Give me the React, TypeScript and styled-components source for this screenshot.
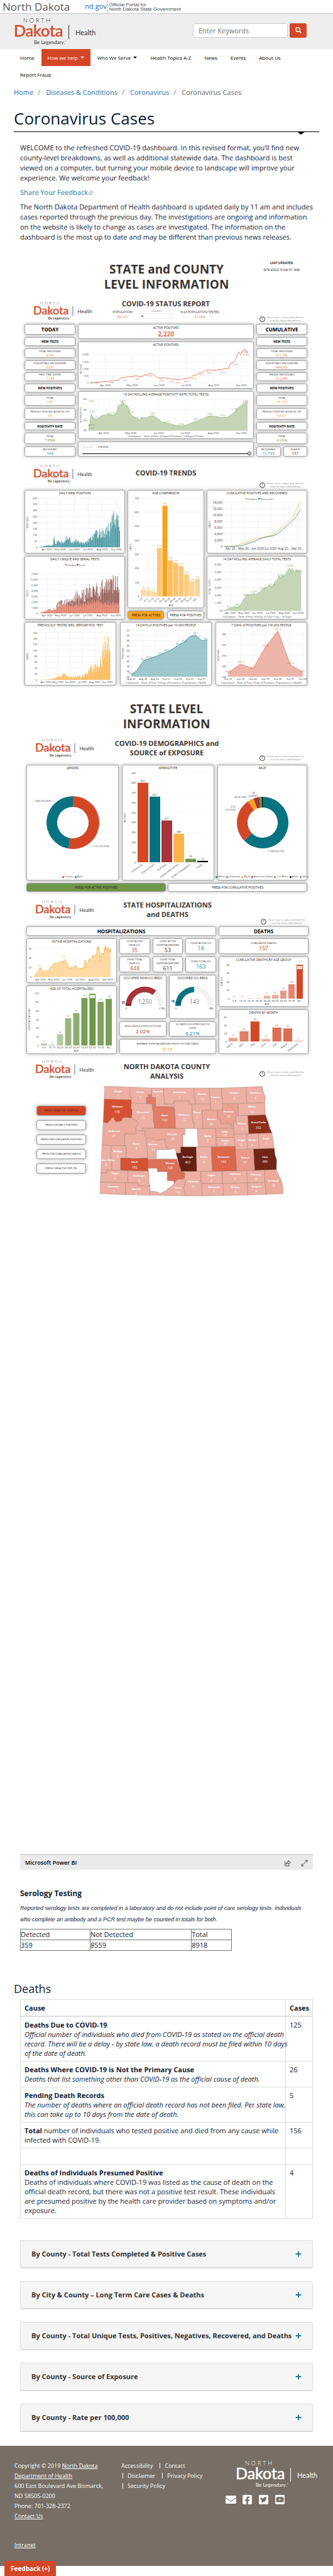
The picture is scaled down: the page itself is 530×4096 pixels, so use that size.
import React from 'react';
import styled, { createGlobalStyle } from 'styled-components';
import { FaEnvelope, FaFacebookSquare, FaTwitterSquare, FaYoutubeSquare, FaSearch, FaPlus } from 'react-icons/fa';

const color = {
  orange: '#d34727',
  teal: '#077380',
  yellow: '#faa21b',
  green: '#6f9649',
  maroon: '#a73439',
  black: '#000000',
  ink: '#111c33',
  title: '#3a3532',
  link: '#1a75ad',
  grid: '#cfcfcf',
};

const Global = createGlobalStyle`
  * { box-sizing: border-box; }
  body { margin: 0; background: #fff; color: ${color.ink}; font-family: "Open Sans", "Noto Sans", sans-serif; font-size: 11px; line-height: 16px; }
  h1, h2, h3, h4, p, ul, ol { margin: 0; padding: 0; }
  ul, ol { list-style: none; }
  button, input, select { font-family: inherit; }
  a { color: ${color.link}; text-decoration: none; }
  svg { display: block; }
`;

/* ---------- site header ---------- */

const Portal = styled.div`
  display: flex; align-items: center; height: 22px; padding: 0 4px; border-bottom: 1px solid #c4c4c4;
`;
const PortalState = styled.span`font-size: 17px; line-height: 20px; color: #5a5a5a; margin-right: 24px;`;
const PortalSite = styled.a`
  font-size: 11px; line-height: 18px; height: 20px; color: #2b62ab; border-right: 1px solid #bbb; padding-right: 1px; margin-right: 2px;
`;
const PortalNote = styled.span`font: 8px/7px "Liberation Sans", Arial, sans-serif; color: #4a4a4a;`;

const Banner = styled.header`
  display: flex; justify-content: space-between; align-items: center; height: 56px; padding: 0 42px 0 22px; background: #eee;
`;
const LogoBox = styled.div<{ $width: number }>`width: ${p => p.$width}px; flex: none; svg { width: 100%; }`;
const Search = styled.form`display: flex; gap: 3px; margin-bottom: 4px;`;
const SearchInput = styled.input`
  width: 151px; height: 23px; padding: 0 8px; border: 1px solid #ccc; border-radius: 3px; background: #fff; font-size: 11px;
  &::placeholder { color: #757575; opacity: 1; }
`;
const SearchButton = styled.button`
  display: flex; align-items: center; justify-content: center; width: 27px; height: 23px; padding: 0; border: 0; border-radius: 3px;
  background: ${color.orange}; color: #fff; font-size: 10px;
`;
const Nav = styled.nav`padding: 0 22px;`;
const NavList = styled.ul`display: flex; flex-wrap: wrap; column-gap: 1px; padding-right: 20px;`;
const NavLink = styled.a<{ $active?: boolean }>`
  display: flex; align-items: center; gap: 4px; height: 27px; padding: 0 10px; font-size: 8px;
  color: ${p => (p.$active ? '#fff' : '#000')}; background: ${p => (p.$active ? color.orange : 'transparent')};
`;
const Caret = styled.span`border: 3px solid transparent; border-top: 3px solid currentColor; border-bottom: 0;`;

const Main = styled.main`padding: 7px 22px 22px;`;
const Crumbs = styled.ol`
  display: flex; color: #666; font-size: 11px; line-height: 16px;
  li + li::before { content: "/"; margin: 0 9px 0 7px; color: #777; }
`;
const PageTitle = styled.h1`
  position: relative; margin-top: 17px; padding-bottom: 5px; border-bottom: 1px solid #000;
  font-size: 26px; line-height: 32px; font-weight: 400; color: ${color.ink};
  &::after { content: ""; position: absolute; right: 22px; top: 37px; border: 7px solid transparent; border-top: 5px solid #000; border-bottom: 0; }
`;
const Body = styled.div`padding: 0 10px;`;
const Intro = styled.div`
  display: flex; flex-direction: column; gap: 7px; margin: 17px -10px 0 0;
  p { white-space: pre-line; }
`;
const ExternalLink = styled.a`display: inline-flex; align-items: center; gap: 1px;`;

/* ---------- report ---------- */

const Report = styled.section`padding-bottom: 1045px; color: #252423;`;
const ReportTop = styled.div<{ $top: number }>`position: relative; padding-top: ${p => p.$top}px;`;
const Updated = styled.div`
  position: absolute; right: 17px; top: 29px; width: 66px; text-align: center; font-size: 6px; line-height: 10px;
  b { display: block; font-size: 5px; line-height: 8px; margin-bottom: 2px; }
`;
const ReportTitle = styled.h2`
  text-align: center; font-size: 19px; line-height: 24px; font-weight: 700; color: ${color.title};
`;
const Board = styled.section<{ $top: number; $left: number; $right: number }>`
  margin: ${p => p.$top}px ${p => p.$right}px 0 ${p => p.$left}px;
`;
const BoardHead = styled.div<{ $height: number }>`
  display: grid; grid-template-columns: 1fr auto 1fr; height: ${p => p.$height}px;
`;
const BoardLogo = styled.div<{ $top: number }>`padding: ${p => p.$top}px 0 0 14px;`;
const BoardMid = styled.div<{ $top: number }>`padding-top: ${p => p.$top}px; text-align: center;`;
const BoardTitle = styled.h3`font-size: 11px; line-height: 15px; font-weight: 700; color: ${color.title};`;
const Help = styled.div<{ $bottom: number }>`
  display: flex; align-self: end; justify-self: end; align-items: center; gap: 3px; padding: 0 5px ${p => p.$bottom}px 0;
  font-size: 4px; line-height: 5px; color: #777; text-align: center;
`;
const HelpButton = styled.button`
  width: 9px; height: 9px; padding: 0; border: 1px solid #333; border-radius: 50%; background: #fff; color: #222; font-size: 6px; line-height: 7px;
`;
const Facts = styled.div`display: flex; justify-content: center; gap: 11px; margin-top: 2px;`;
const Fact = styled.div<{ $small?: boolean }>`
  font-size: ${p => (p.$small ? 4 : 5)}px; line-height: 8px; color: ${p => (p.$small ? '#777' : '#333')};
  b { display: block; font-size: 5px; font-weight: 400; color: #e0705a; }
  label { display: block; line-height: 6px; }
`;
const CountySelect = styled.select`
  display: block; width: 55px; height: 9px; padding: 0 2px; border: 1px solid #eee; background: #fff; color: #333; font-size: 4px; appearance: none;
`;
const SelectBox = styled.span`
  position: relative; display: block;
  svg { position: absolute; right: 2px; top: 3px; width: 4px; }
`;

const Columns = styled.div<{ $cols: string; $gap: number; $top?: number }>`
  display: grid; grid-template-columns: ${p => p.$cols}; gap: 4px ${p => p.$gap}px; margin-top: ${p => p.$top || 0}px;
`;
const Stack = styled.div`display: flex; flex-direction: column; gap: 4px; min-width: 0;`;
const Card = styled.div<{ $h: number }>`
  display: flex; flex-direction: column; min-width: 0; min-height: ${p => p.$h}px; background: #fff; border: 1px solid #a5a5a5; border-radius: 3px;
  box-shadow: 0 0 4px 1px rgba(0, 0, 0, 0.22);
  svg { width: 100%; }
`;
const Center = styled(Card)`justify-content: center; align-items: center; text-align: center;`;
const CardTitle = styled.h4`
  font-size: 5px; line-height: 9px; font-weight: 400; text-align: center; color: #252423; white-space: nowrap;
`;
const Heading = styled.h4<{ $size: number }>`font-size: ${p => p.$size}px; line-height: 10px; font-weight: 700; color: #000;`;
const Label = styled.div<{ $tight?: boolean }>`font-size: ${p => (p.$tight ? 3 : 4)}px; line-height: 6px; color: #252423; white-space: pre;`;
const Value = styled.div<{ $size: number; $tint: string; $bold?: boolean }>`
  font-size: ${p => p.$size}px; line-height: ${p => p.$size + 1}px; color: ${p => p.$tint}; font-weight: ${p => (p.$bold ? 700 : 400)};
`;
const Press = styled.button<{ $h: number; $fill?: string; $small?: boolean }>`
  min-width: 0; height: ${p => p.$h}px; padding: 0; border: 1px solid #9a9a9a; border-radius: 4px; background: ${p => p.$fill || '#fff'};
  box-shadow: 0 0 4px 1px rgba(0, 0, 0, 0.22); color: #111; font-size: ${p => (p.$small ? 4 : 5)}px; line-height: 8px; white-space: nowrap;
`;
const Legend = styled.ul`
  display: flex; justify-content: center; gap: 2px; margin-top: auto; padding-bottom: 2px; font-size: 4px; line-height: 6px; color: #333;
  li { display: flex; align-items: center; gap: 1px; white-space: nowrap; }
`;
const Dot = styled.i<{ $tint: string }>`width: 3px; height: 3px; border-radius: 50%; background: ${p => p.$tint};`;
const Dates = styled.div`display: flex; gap: 2px; padding: 3px 3px 0;`;
const DateInput = styled.input`
  width: 23px; height: 9px; padding: 0 2px; border: 1px solid #eee; font-size: 4px; color: #222;
  &:disabled { background: #fff; color: #bbb; }
`;
const Range = styled.input`
  appearance: none; display: block; width: auto; height: 8px; margin: 2px 3px 0 6px; background: linear-gradient(#000, #000) center / 100% 1px no-repeat;
  &::-webkit-slider-thumb { appearance: none; width: 6px; height: 6px; border: 1px solid #222; border-radius: 50%; background: #fff; }
`;
const CountyLayout = styled.div`display: grid; grid-template-columns: 79px 1fr; gap: 22px; padding: 0 38px 0 16px; margin-top: 8px;`;
const CountyButtons = styled.div`display: flex; flex-direction: column; gap: 7px; padding-top: 31px;`;
const MapFigure = styled.div`svg { width: 100%; }`;

/* ---------- drawings ---------- */

function Logo({ light }: { light?: boolean }) {
  const dark = light ? '#fff' : '#333';
  return (
    <svg viewBox="0 0 132 45" fontFamily="Lato, sans-serif" role="img" aria-label="North Dakota Health, Be Legendary">
      <text x="15" y="8" fontSize="9" fontWeight="300" letterSpacing="3" fill={dark}>NORTH</text>
      <text x="0" y="30" fontSize="25" fontWeight="400" stroke={light ? '#fff' : color.orange} strokeWidth="0.5" fill={light ? '#fff' : color.orange}>Dakota</text>
      <path d="M87.500 12V34" stroke={dark} strokeWidth="1" />
      <text x="98" y="28" fontSize="11" fill={dark}>Health</text>
      <text x="32" y="42" fontSize="8" fill={dark}>Be Legendary.<tspan fontSize="3" dy="-3">™</tspan></text>
    </svg>
  );
}

const MONTHS: [string, number][] = [['Apr', 17], ['May', 47], ['Jun', 78], ['Jul', 108], ['Aug', 139], ['Sep', 170]];
type Pt = [number, number];
type Tag = [number, number, string];
interface Plot {
  w: number; h: number; l: number; r: number; t: number; b: number; // drawing size and plot edges
  lo: number; hi: number; // values at the bottom and top edges
}
const yOf = (p: Plot, v: number) => p.b - ((v - p.lo) / (p.hi - p.lo)) * (p.b - p.t);
const dayX = (p: Plot, d: number) => p.l + (d / 177) * (p.r - p.l);

function Axis({ p, ticks, fmt, name, size = 4, faint }: { p: Plot; ticks: number[]; fmt?: (v: number) => string; name?: string; size?: number; faint?: boolean }) {
  return (
    <g fontSize={size} fill="#333">
      {ticks.map(v => (
        <g key={v}>
          <path d={`M${p.l - 2} ${yOf(p, v)}H${p.r + 2}`} stroke={faint ? '#eee' : color.grid} strokeWidth="0.6" strokeDasharray="0.7 1" />
          <text x={p.l - 3} y={yOf(p, v) + 1.5} textAnchor="end">{fmt ? fmt(v) : v.toLocaleString('en-US')}</text>
        </g>
      ))}
      {name && <text transform={`translate(5 ${(p.t + p.b) / 2}) rotate(-90)`} fontSize="4" textAnchor="middle">{name}</text>}
    </g>
  );
}

function MonthAxis({ p, short, plain, size = 4 }: { p: Plot; short?: boolean; plain?: boolean; size?: number }) {
  return (
    <g fontSize={size} fill="#333">
      {MONTHS.map(([m, d]) => (
        <g key={m}>
          {!plain && <path d={`M${dayX(p, d)} ${p.t}V${p.b}`} stroke={color.grid} strokeWidth="0.6" strokeDasharray="0.7 1" />}
          <text x={dayX(p, d)} y={p.b + 5} textAnchor="middle">{m} {short && !m.startsWith('Ju') ? '20...' : '2020'}</text>
        </g>
      ))}
    </g>
  );
}

function DateAxis({ p, labels, x }: { p: Plot; labels: string[]; x: (i: number) => number }) {
  return (
    <g fontSize="4" fill="#333" textAnchor="middle">
      {labels.map((s, i) => (
        <g key={s}>
          <path d={`M${x(i)} ${p.t}V${p.b}`} stroke={color.grid} strokeWidth="0.6" strokeDasharray="0.7 1" />
          <text x={x(i)} y={p.b + 5}>{s}</text>
        </g>
      ))}
    </g>
  );
}

function Tags({ p, tags, fill, at }: { p: Plot; tags: Tag[]; fill: string; at?: (d: number) => number }) {
  return (
    <g fontSize="4" fill={fill} textAnchor="middle">
      {tags.map(([d, v, s]) => <text key={s + d} x={at ? at(d) : dayX(p, d)} y={yOf(p, v) + 1.5}>{s}</text>)}
    </g>
  );
}

function Line({ p, data, stroke, fill, at }: { p: Plot; data: Pt[]; stroke: string; fill?: string; at?: (d: number) => number }) {
  const x = at || ((d: number) => dayX(p, d));
  const path = 'M' + data.map(([d, v]) => `${x(d).toFixed(1)} ${yOf(p, v).toFixed(1)}`).join('L');
  return (
    <>
      {fill && <path d={`${path}V${p.b}H${x(data[0][0])}Z`} fill={fill} fillOpacity="0.4" />}
      <path d={path} fill="none" stroke={stroke} strokeWidth="0.7" />
    </>
  );
}

const Caption = ({ p, y, children }: { p: Plot; y: number; children: string }) => (
  <text x={p.w / 2} y={y} fontSize="4" fill="#333" textAnchor="middle">{children}</text>
);

/* value of a piecewise linear curve at one day, with a repeatable day to day variation */
function daily(env: Pt[], swing: number, seed: number) {
  const out: number[] = [];
  for (let d = 0; d <= 177; d++) {
    let i = 0;
    while (i < env.length - 2 && env[i + 1][0] < d) i++;
    const [a, va] = env[i];
    const [b, vb] = env[i + 1];
    const v = va + ((vb - va) * (d - a)) / (b - a);
    const n = Math.abs(Math.sin(d * 12.9898 + seed) * 43758.5453) % 1;
    out.push(v * (1 - swing * n));
  }
  return out;
}

function DayBars({ p, values, fill, base }: { p: Plot; values: number[]; fill: string; base?: number[] }) {
  return (
    <g fill={fill}>
      {values.map((v, d) => {
        const from = base ? Math.min(base[d], v) : 0;
        return <rect key={d} x={dayX(p, d) - 0.35} y={yOf(p, v)} width="0.7" height={Math.max(0, yOf(p, from) - yOf(p, v))} opacity={d % 4 < 2 ? 1 : 0.72} />;
      })}
    </g>
  );
}

interface Bar { name: string; v: number; tint?: string; alpha?: number; boxed?: boolean }
function Bars({ p, bars, step, width, fill, tilt, tag }: { p: Plot; bars: Bar[]; step: number; width: number; fill?: string; tilt?: boolean; tag?: string }) {
  return (
    <g fontSize="4" textAnchor="middle">
      {bars.map((b, i) => {
        const x = p.l + i * step;
        const mid = x + width / 2;
        const y = yOf(p, Math.min(b.v, p.hi));
        return (
          <g key={b.name}>
            <rect x={x} y={y} width={width} height={p.b - y} fill={b.tint || fill} opacity={b.alpha || 1} />
            {b.boxed && <rect x={mid - 4} y={y + 2} width="8" height="5" fill="#fff" />}
            <text x={mid} y={b.boxed ? y + 6 : y - 2} fill={tag || fill}>{b.v}</text>
            {tilt
              ? <text transform={`translate(${mid} ${p.b + 4}) rotate(-36)`} textAnchor="end" fill="#333">{b.name}</text>
              : <text x={mid} y={p.b + 5} fill="#333">{b.name}</text>}
          </g>
        );
      })}
    </g>
  );
}

function Donut({ cx, cy, r, inner, parts }: { cx: number; cy: number; r: number; inner: number; parts: [number, string][] }) {
  const total = parts.reduce((s, [v]) => s + v, 0);
  let from = 0;
  return (
    <>
      {parts.map(([v, tint]) => {
        const a = (from / total) * 2 * Math.PI;
        from += v;
        const b = (from / total) * 2 * Math.PI;
        const pt = (rad: number, t: number) => `${(cx + rad * Math.sin(t)).toFixed(2)} ${(cy - rad * Math.cos(t)).toFixed(2)}`;
        const big = b - a > Math.PI ? 1 : 0;
        return <path key={tint} fill={tint} d={`M${pt(r, a)}A${r} ${r} 0 ${big} 1 ${pt(r, b)}L${pt(inner, b)}A${inner} ${inner} 0 ${big} 0 ${pt(inner, a)}Z`} />;
      })}
    </>
  );
}

function Gauge({ value, max, mark, share, tint }: { value: string; max: string; mark: string; share: number; tint: string }) {
  const cx = 40, cy = 40, r = 31, inner = 22;
  const pt = (rad: number, s: number) => `${(cx - rad * Math.cos(s * Math.PI)).toFixed(2)} ${(cy - rad * Math.sin(s * Math.PI)).toFixed(2)}`;
  const arc = (a: number, b: number) => `M${pt(r, a)}A${r} ${r} 0 0 1 ${pt(r, b)}L${pt(inner, b)}A${inner} ${inner} 0 0 0 ${pt(inner, a)}Z`;
  const m = mark === '18' ? 0.062 : 0.02;
  return (
    <svg viewBox="0 0 74 59">
      <path d={arc(0, 1)} fill="#f3f2f1" />
      <path d={arc(0, share)} fill={tint} />
      <path d={`M${pt(r, m)}L${pt(inner, m)}`} stroke="#000" strokeWidth="0.7" />
      <text x="8" y={mark === '18' ? 34 : 37} fontSize="5" fontWeight="600" textAnchor="end">{mark}</text>
      <text x={cx} y="37" fontSize="9" fontWeight="300" textAnchor="middle" fill="#222">{value}</text>
      <text x="10" y="46" fontSize="4" textAnchor="middle">0</text>
      <text x="67" y="46" fontSize="4" textAnchor="middle">{max}</text>
    </svg>
  );
}

/* ---------- data ---------- */

const ACTIVE: Pt[] = [[0, 5], [11, 60], [17, 100], [25, 135], [30, 170], [32, 220], [34, 360], [39, 370], [41, 435], [46, 440], [49, 490], [53, 490], [56, 430], [59, 480], [61, 560], [64, 560], [66, 680], [69, 650], [72, 550], [74, 420], [77, 350], [80, 325], [83, 370], [85, 330], [89, 310], [92, 265], [97, 245], [99, 225], [103, 260], [107, 290], [110, 350], [113, 350], [115, 490], [118, 560], [121, 610], [123, 720], [127, 750], [129, 870], [133, 920], [134, 890], [136, 930], [139, 885], [142, 900], [145, 965], [148, 915], [150, 1015], [153, 1025], [155, 975], [157, 1280], [159, 1430], [161, 1430], [163, 1600], [165, 1930], [167, 2190], [169, 2010], [171, 2250], [174, 2390], [175, 2280], [177, 2110]];
const ACTIVE_TAGS: Tag[] = [[1, 20, '6'], [8, 20, '60'], [24, 30, '132'], [39, 190, '376'], [53, 300, '491'], [67, 485, '672'], [80, 150, '323'], [91, 100, '275'], [99, 30, '213'], [108, 120, '303'], [117, 330, '523'], [126, 605, '771'], [134, 745, '922'], [149, 715, '912'], [162, 1310, '1,508'], [174, 2200, '2,394'], [175, 2035, '2,220']];
const RATE: Pt[] = [[0, 1.2], [1, 0.7], [3, 3.2], [5, 2.4], [7, 2.2], [10, 2.2], [11, 2.4], [13, 2.7], [16, 3], [20, 3], [22, 3.4], [24, 3.1], [27, 3], [30, 3.2], [32, 3.9], [33, 4.8], [36, 5], [38, 5.6], [40, 5], [43, 4.8], [45, 4.2], [46, 3.4], [49, 2.8], [53, 2.5], [55, 2.3], [57, 2], [58, 2.3], [62, 2.5], [64, 2.4], [67, 2.7], [71, 2.9], [74, 2.7], [77, 2.3], [79, 2.1], [81, 1.7], [84, 1.6], [88, 1.4], [92, 1.3], [97, 1], [104, 0.9], [109, 1.1], [112, 1.3], [117, 1.7], [122, 1.8], [124, 2.2], [126, 2.2], [131, 2.6], [135, 2.8], [142, 2.7], [148, 2.5], [155, 2.6], [158, 3], [162, 3.4], [165, 4.2], [168, 4.6], [170, 4.8], [173, 5.3], [175, 5.5], [177, 5.5]];
const RATE_TAGS: Tag[] = [[3, 5.75, '5.9%'], [4, 3.6, '3.2%'], [8, 2.6, '2.2%'], [3, 1.1, '0.8%'], [3, 0.4, '0.0%'], [27, 3.4, '3.1%'], [38, 5.75, '5.6%'], [47, 3.5, '3.1%'], [57, 2.4, '2.1%'], [71, 3.25, '2.9%'], [87, 1.75, '1.4%'], [103, 1.3, '0.9%'], [119, 2.2, '1.8%'], [135, 3.2, '2.8%'], [149, 2.9, '2.5%'], [163, 4.1, '3.7%'], [175, 5.75, '5.6%']];
const NEW_POSITIVES = daily([[0, 1], [8, 8], [17, 20], [25, 20], [30, 25], [33, 95], [36, 45], [40, 60], [43, 75], [47, 50], [55, 70], [62, 95], [66, 95], [70, 60], [76, 50], [82, 70], [90, 50], [100, 45], [108, 65], [114, 100], [120, 115], [128, 160], [136, 140], [139, 170], [143, 150], [148, 190], [152, 200], [156, 160], [158, 275], [161, 265], [165, 335], [167, 370], [169, 270], [172, 355], [175, 320], [177, 240]], 0.55, 3);
const TESTS_TOTAL = daily([[0, 10], [10, 450], [17, 650], [30, 950], [35, 1100], [40, 2100], [50, 2500], [60, 2700], [70, 2400], [78, 3200], [83, 4000], [88, 3400], [95, 4400], [103, 4400], [112, 5900], [120, 5000], [128, 5600], [135, 5200], [140, 6000], [147, 6000], [152, 7000], [159, 7700], [162, 7000], [168, 7900], [172, 7200], [177, 5000]], 0.55, 8);
const TESTS_UNIQUE = daily([[0, 10], [10, 400], [17, 600], [35, 900], [40, 2000], [50, 2200], [60, 2000], [80, 1900], [100, 2000], [120, 2500], [140, 2200], [177, 2000]], 0.45, 5);
const NEG_BEFORE = daily([[0, 0], [17, 1], [35, 4], [45, 12], [55, 20], [65, 22], [75, 12], [90, 14], [105, 16], [115, 22], [122, 35], [126, 58], [131, 50], [136, 45], [141, 62], [146, 72], [150, 55], [153, 112], [157, 100], [162, 160], [165, 130], [171, 170], [174, 150], [177, 95]], 0.6, 11);
const CUM_POS: Pt[] = [[0, 0], [17, 150], [30, 350], [33, 550], [47, 1150], [52, 1400], [56, 1450], [62, 1900], [68, 2300], [75, 2550], [85, 2850], [95, 3150], [108, 3550], [113, 3850], [120, 4500], [130, 5700], [139, 6600], [148, 7800], [156, 8900], [162, 10100], [166, 11500], [170, 12300], [174, 13600], [177, 14100]];
const CUM_REC: Pt[] = [[0, 0], [30, 150], [40, 300], [47, 650], [55, 950], [62, 1350], [70, 1600], [78, 2250], [88, 2700], [100, 3100], [115, 3500], [122, 4000], [130, 4800], [139, 5800], [148, 7000], [156, 8000], [163, 8900], [168, 9800], [173, 11000], [177, 11800]];
const ROLLING: Pt[] = [[-6, 10], [0, 10], [5, 60], [10, 200], [17, 380], [25, 500], [33, 490], [37, 600], [42, 950], [47, 1500], [50, 1700], [53, 2050], [58, 1950], [62, 2150], [66, 2100], [70, 2250], [74, 2100], [78, 2150], [82, 2400], [84, 2350], [87, 2650], [91, 2700], [95, 3000], [101, 3050], [105, 3350], [107, 3150], [112, 3150], [116, 3500], [120, 3900], [123, 3900], [126, 4500], [130, 4300], [134, 4500], [138, 4450], [141, 4650], [145, 5000], [148, 5300], [151, 5500], [154, 5000], [157, 5400], [160, 5050], [163, 4950], [166, 5300], [170, 5100], [174, 5200], [177, 4900]];
const ROLLING_TAGS: Tag[] = [[-6, 270, '1'], [13, 530, '251'], [32, 750, '495'], [51, 2050, '1,804'], [69, 2480, '2,228'], [89, 2900, '2,692'], [109, 3400, '3,154'], [131, 4550, '4,201'], [152, 5780, '5,507'], [171, 5180, '4,914']];
const HOSP: Pt[] = [[2, 0], [4, 4], [9, 10], [12, 12], [15, 20], [18, 19], [22, 12], [24, 10], [28, 14], [32, 12], [36, 15], [40, 22], [44, 26], [50, 30], [55, 28], [58, 32], [62, 30], [65, 35], [68, 32], [71, 38], [74, 34], [78, 30], [81, 21], [85, 18], [88, 22], [91, 19], [94, 24], [98, 24], [101, 18], [105, 17], [108, 20], [112, 17], [116, 24], [118, 36], [121, 29], [124, 28], [128, 39], [131, 36], [134, 42], [137, 48], [141, 43], [145, 52], [147, 64], [149, 66], [151, 58], [153, 40], [155, 46], [158, 52], [161, 48], [163, 60], [165, 67], [167, 61], [169, 63], [172, 62], [174, 54], [176, 60], [177, 53]];
const AGES: Bar[] = ([['0-5', 48, 0.4], ['6-11', 48, 0.4], ['12-14', 35, 0.4], ['15-19', 345, 0.6], ['20-29', 646, 1], ['30-39', 256, 0.7], ['40-49', 238, 0.65], ['50-59', 216, 0.6], ['60-69', 158, 0.55], ['70-79', 106, 0.45], ['80+', 124, 0.45]] as [string, number, number][]).map(([name, v, alpha]) => ({ name, v, alpha }));
const SPREAD: Bar[] = [
  { name: 'Community', v: 801, tint: color.orange }, { name: 'Close Contact', v: 661, tint: color.teal }, { name: 'Unknown', v: 421, tint: color.maroon },
  { name: 'Household Contact', v: 288, tint: '#fdb549' }, { name: 'Under Investigation', v: 35, tint: color.green }, { name: 'Travel', v: 14, tint: '#000' },
];
const DECADES = ['0-9', '10-19', '20-29', '30-39', '40-49', '50-59', '60-69', '70-79', '80+'];
const HOSP_AGES: Bar[] = [5, 2, 26, 63, 75, 110, 121, 101, 108].map((v, i) => ({ name: DECADES[i], v, alpha: [0.45, 0.45, 0.5, 0.7, 0.78, 0.93, 1, 0.88, 0.92][i], boxed: v === 121 }));
const DEATH_AGES: Bar[] = [0, 0, 1, 1, 7, 9, 19, 34, 86].map((v, i) => ({ name: DECADES[i], v, alpha: [0.4, 0.4, 0.4, 0.4, 0.42, 0.45, 0.55, 0.65, 1][i], boxed: v === 86 }));
const DEATH_MONTHS: Bar[] = ([['March', 9, 0.5], ['April', 25, 0.7], ['May', 49, 1], ['June', 6, 0.45], ['July', 34, 0.8], ['August', 32, 0.8], ['September', 2, 0.4]] as [string, number, number][]).map(([name, v, alpha]) => ({ name, v, alpha }));

/* name, active cases, label x, label y, outline */
const COUNTIES: [string, number | null, number, number, string][] = [
  ['Divide', 1, 556, 272, '492,234 614,241 612,312 618,312 618,332 490,326'],
  ['Burke', 1, 661, 278, '614,241 714,247 714,293 699,293 699,315 690,315 690,358 618,355 618,312 612,312'],
  ['Renville', 1, 745, 270, '714,247 771,247 775,361 818,363 818,382 733,380 733,315 714,315'],
  ['Bottineau', 7, 847, 278, '771,247 916,247 916,318 920,318 920,361 891,361 891,340 820,340 820,361 775,361'],
  ['Rolette', 13, 953, 290, '916,247 987,247 989,318 992,318 992,361 920,361 920,318 916,318'],
  ['Towner', 1, 1017, 310, '987,247 1046,247 1046,318 1050,318 1050,403 992,405 992,318 989,318'],
  ['Cavalier', 2, 1105, 282, '1046,247 1160,241 1164,355 1050,358 1050,318 1046,318'],
  ['Pembina', 5, 1205, 282, '1160,241 1237,236 1240,262 1253,320 1249,352 1164,355'],
  ['McKenzie', 21, 537, 552, '486,488 500,496 512,488 512,480 522,475 521,465 528,458 538,455 536,470 548,487 574,478 576,460 590,455 620,460 640,473 651,495 640,530 640,574 588,572 586,658 480,652'],
  ['Williams', 178, 552, 380, '490,326 618,332 618,398 623,398 620,460 590,455 576,460 574,478 548,487 536,470 538,455 528,458 521,465 522,475 512,480 512,488 500,496 486,488'],
  ['Mountrail', 12, 674, 420, '618,355 718,360 718,403 723,403 723,490 727,490 727,533 670,533 672,550 655,554 640,540 640,530 651,495 640,473 620,460 623,398 618,398'],
  ['Ward', 102, 775, 440, '699,293 714,293 714,315 733,315 733,380 820,382 824,405 828,535 727,533 727,490 723,490 723,403 718,403 718,360 690,358 690,315 699,315'],
  ['McHenry', 10, 867, 437, '820,340 891,340 891,361 905,361 909,490 914,490 914,535 828,535 824,405 820,382'],
  ['Pierce', 3, 929, 420, '905,361 992,361 992,405 953,405 957,535 914,535 914,490 909,490'],
  ['Benson', 20, 997, 467, '953,405 1024,405 1026,460 1040,470 1040,495 1055,505 1070,485 1073,505 1085,495 1090,515 1101,517 1101,532 957,535'],
  ['Ramsey', 34, 1078, 414, '1050,358 1122,358 1125,443 1113,445 1113,488 1101,490 1101,517 1090,515 1085,495 1073,505 1070,485 1055,505 1040,495 1040,470 1026,460 1024,405 1050,403'],
  ['Walsh', 12, 1189, 380, '1122,358 1249,352 1252,438 1169,442 1125,443'],
  ['Nelson', 1, 1142, 500, '1113,445 1169,442 1174,572 1103,574 1101,490 1113,488'],
  ['Grand Forks', 332, 1219, 491, '1169,442 1252,438 1265,490 1272,530 1283,566 1174,572'],
  ['McLean', 25, 812, 575, '670,533 872,535 872,580 862,580 862,666 852,666 852,709 830,709 825,680 795,682 785,670 782,650 775,630 780,607 755,615 735,620 705,602 690,602 683,590 683,550 672,550'],
  ['Dunn', 4, 642, 641, '588,572 640,574 640,540 655,554 672,550 683,550 683,590 690,602 688,660 693,662 695,744 628,748 593,745 594,658 586,658'],
  ['Mercer', 10, 722, 647, '690,602 705,602 735,620 755,615 780,607 775,630 782,650 785,670 795,682 737,686 737,748 698,748 695,744 693,662 688,660'],
  ['Oliver', null, 0, 0, '737,686 795,684 820,678 828,690 830,709 836,740 833,752 737,748'],
  ['Sheridan', null, 0, 0, '872,535 930,535 934,600 934,664 862,666 862,580 872,580'],
  ['Wells', 2, 979, 587, '930,535 1016,535 1020,598 1020,662 934,664'],
  ['Eddy', 18, 1061, 556, '1016,535 1101,532 1103,598 1020,598'],
  ['Foster', 10, 1063, 618, '1020,598 1105,598 1107,662 1020,662'],
  ['Griggs', 2, 1138, 614, '1103,574 1164,573 1167,680 1110,682'],
  ['Steele', 5, 1190, 617, '1164,573 1219,571 1222,678 1167,680'],
  ['Traill', 7, 1256, 608, '1219,571 1283,566 1288,610 1294,675 1222,678'],
  ['Golden Valley', 6, 500, 757, '480,652 523,656 521,742 526,742 527,830 503,830 503,850 474,850'],
  ['Billings', 2, 555, 695, '523,656 594,658 593,745 568,745 568,830 527,830 526,742 521,742'],
  ['Stark', 182, 634, 773, '568,745 593,745 628,748 695,744 698,752 698,836 602,834 568,830'],
  ['Morton', 125, 802, 779, '698,752 833,752 848,810 850,828 872,850 870,892 835,897 820,925 818,905 788,905 788,840 741,840 741,817 698,817'],
  ['Grant', null, 0, 0, '698,817 741,817 741,840 788,840 788,905 818,905 820,925 805,950 788,965 788,972 757,995 740,985 724,980 707,982 705,935 702,920'],
  ['Emmons', 11, 912, 911, '850,838 948,838 948,925 952,925 952,1013 878,1012 866,965 874,910 872,850'],
  ['Burleigh', 403, 885, 737, '852,666 925,666 928,838 855,838 848,810 830,709 852,709'],
  ['Kidder', 8, 962, 737, '925,666 996,664 1001,838 928,838'],
  ['Stutsman', 142, 1054, 734, '996,664 1110,662 1117,835 1001,838'],
  ['Barnes', 47, 1157, 740, '1110,684 1196,680 1202,832 1117,835'],
  ['Cass', 386, 1250, 734, '1196,680 1294,675 1297,720 1305,755 1304,826 1202,832'],
  ['Slope', 1, 541, 854, '503,830 602,834 602,920 472,914 474,850 503,850'],
  ['Hettinger', 9, 655, 869, '602,834 702,838 702,920 707,943 650,940 650,922 602,920'],
  ['Bowman', 3, 535, 944, '472,914 592,920 592,1004 470,997'],
  ['Adams', 2, 641, 962, '592,920 650,922 650,940 707,943 707,1008 592,1004'],
  ['Sioux', 10, 839, 953, '707,982 724,980 740,985 757,995 788,972 788,965 805,950 820,925 835,897 870,892 874,910 866,965 878,1012 707,1008'],
  ['Logan', 2, 997, 866, '948,838 1049,838 1049,924 948,925'],
  ['McIntosh', 1, 1009, 950, '952,925 1053,924 1053,1010 952,1013'],
  ['LaMoure', 7, 1109, 857, '1049,838 1164,834 1167,921 1049,924'],
  ['Dickey', 4, 1111, 950, '1053,924 1167,921 1169,1007 1053,1010'],
  ['Ransom', 6, 1208, 860, '1164,834 1247,829 1250,917 1167,921'],
  ['Sargent', 6, 1210, 944, '1167,921 1250,917 1257,1002 1169,1007'],
  ['Richland', 18, 1290, 905, '1247,829 1304,826 1310,850 1327,900 1335,960 1335,997 1257,1002 1250,917'],
];
const shade = (v: number | null) => {
  if (v === null) return '#fff';
  if (v > 400) return '#642011';
  if (v > 380) return '#702517';
  if (v > 300) return '#8e2f1a';
  if (v > 170) return '#d45233';
  if (v > 140) return '#db674c';
  if (v > 120) return '#dd7058';
  if (v > 100) return '#e17c66';
  if (v > 40) return '#e89b8a';
  if (v > 30) return '#e9a293';
  if (v > 15) return '#ebaa9c';
  return '#ecb0a4';
};

function CountyMap() {
  return (
    <svg viewBox="0 0 293 176" role="img" aria-label="Active positives by county">
      <g transform="scale(.338 .225) translate(-470 -234)" stroke="#7a5a52" strokeOpacity="0.6" strokeWidth="0.5">
        {COUNTIES.map(c => <polygon key={c[0]} points={c[4]} fill={shade(c[1])} vectorEffect="non-scaling-stroke" />)}
      </g>
      <g fill="#fff" textAnchor="middle" fontSize="4">
        {COUNTIES.filter(c => c[1] !== null).map(([name, v, x, y]) => (
          <g key={name}>
            <text x={(x - 470) * 0.338} y={(y - 234) * 0.225 + 1.5} fontWeight="700">{name}</text>
            <text x={(x - 470) * 0.338} y={(y - 234) * 0.225 + (name === 'Eddy' || name === 'Foster' ? 8 : 10)} fontSize="5">{v}</text>
          </g>
        ))}
      </g>
    </svg>
  );
}

/* ---------- report parts ---------- */

function Head({ height, top, logoTop, help, title, children }: { height: number; top: number; logoTop: number; help: number; title: string[]; children?: React.ReactNode }) {
  return (
    <BoardHead $height={height}>
      <BoardLogo $top={logoTop}><LogoBox $width={95}><Logo /></LogoBox></BoardLogo>
      <BoardMid $top={top}>
        <BoardTitle>{title.map((t, i) => <React.Fragment key={t}>{i > 0 && <br />}{t}</React.Fragment>)}</BoardTitle>
        {children}
      </BoardMid>
      <Help $bottom={help}>
        <HelpButton type="button" aria-label="Help">?</HelpButton>
        <span>Hover over a value and click the<br />icon for more information</span>
      </Help>
    </BoardHead>
  );
}

const Metric = ({ h, label, value, tint, size = 5, tight }: { h: number; label: string; value: string; tint: string; size?: number; tight?: boolean }) => (
  <Center $h={h}><Label $tight={tight}>{label}</Label><Value $size={size} $tint={tint}>{value}</Value></Center>
);

const salmon = '#e0705a';

function SideColumn({ title, values, children }: { title: string; values: string[]; children: React.ReactNode }) {
  return (
    <Stack>
      <Center $h={17}><Heading $size={8}>{title}</Heading></Center>
      <Center $h={14}><Heading $size={5}>NEW TESTS</Heading></Center>
      <Metric h={15} label="TOTAL PROCESSED" value={values[0]} tint={salmon} />
      <Metric h={15} label="SUSCEPTIBLE ENCOUNTERS" value={values[1]} tint={salmon} />
      <Metric h={14} label={title === 'TODAY' ? 'FIRST TIME TESTED' : 'UNIQUE INDIVIDUALS'} value={values[2]} tint={salmon} />
      <Center $h={14}><Heading $size={5}>NEW POSITIVES</Heading></Center>
      <Metric h={17} label="TOTAL" value={values[3]} tint={color.yellow} size={6} />
      <Metric h={18} label="PREVIOUSLY TESTED NEG. BEFORE POS. TEST" value={values[4]} tint={color.yellow} size={6} tight />
      <Center $h={13}><Heading $size={5}>POSITIVITY RATE</Heading></Center>
      <Metric h={18} label="TOTAL" value={values[5]} tint={color.green} size={6} />
      {children}
    </Stack>
  );
}

function StatusReport() {
  const a: Plot = { w: 279, h: 64, l: 19, r: 270, t: 11, b: 56, lo: 0, hi: 2000 };
  const b: Plot = { w: 279, h: 65, l: 16, r: 270, t: 3, b: 53, lo: 0, hi: 6 };
  return (
    <Board $top={11} $left={7} $right={9}>
      <Head height={38} top={0} logoTop={3} help={1} title={['COVID-19 STATUS REPORT']}>
        <Facts>
          <Fact>POPULATION<b>760,077</b></Fact>
          <Fact $small>
            <label htmlFor="county">COUNTY</label>
            <SelectBox>
              <CountySelect id="county"><option>All</option></CountySelect>
              <svg viewBox="0 0 8 5" fill="none" stroke="#999"><path d="M.5.5 4 4.500 7.500.5" /></svg>
            </SelectBox>
          </Fact>
          <Fact>% of POPULATION TESTED<b>27.06%</b></Fact>
        </Facts>
      </Head>
      <Columns $cols="81fr 280fr 81fr" $gap={4} $top={2}>
        <SideColumn title="TODAY" values={['3,167', '3,031', '1,134', '239', '95', '7.89%']}>
          <Metric h={16} label="RECOVERED" value="164" tint={color.teal} size={6} />
        </SideColumn>
        <Stack>
          <Center $h={24}><CardTitle>ACTIVE POSITIVES</CardTitle><Value $size={10} $tint={salmon} $bold>2,220</Value></Center>
          <Card $h={75}>
            <CardTitle>ACTIVE POSITIVES</CardTitle>
            <svg viewBox="0 0 279 64">
              <Axis p={a} ticks={[0, 500, 1000, 1500, 2000]} name="ACTIVES" />
              <MonthAxis p={a} />
              <Line p={a} data={ACTIVE} stroke={color.orange} />
              <Tags p={a} tags={ACTIVE_TAGS} fill={salmon} />
            </svg>
          </Card>
          <Card $h={76}>
            <CardTitle>14 DAY ROLLING AVERAGE POSITIVITY RATE (TOTAL TESTS)</CardTitle>
            <svg viewBox="0 0 279 65">
              <Line p={b} data={RATE} stroke="#8fb071" fill={color.green} />
              <Axis p={b} ticks={[0, 2, 4, 6]} fmt={v => `${v}%`} name="% POSITIVITY" />
              <MonthAxis p={b} />
              <Tags p={b} tags={RATE_TAGS} fill="#7fa35c" />
              <Caption p={b} y={63}>Calculation = (Sum of Past 14 Days of Positives / 14 Days of Tests)</Caption>
            </svg>
          </Card>
          <Card $h={24}>
            <Dates>
              <DateInput aria-label="From" disabled defaultValue="3/15/2020" />
              <DateInput aria-label="To" defaultValue="9/8/2020" />
            </Dates>
            <Range type="range" aria-label="Date" defaultValue={100} />
          </Card>
        </Stack>
        <SideColumn title="CUMULATIVE" values={['511,730', '494,769', '212,959', '14,110', '4,607', '6.63%']}>
          <Columns $cols="1fr 1fr" $gap={4}>
            <Metric h={16} label="RECOVERED" value="11,733" tint={color.teal} size={6} />
            <Metric h={16} label="DEATHS" value="157" tint="#222" size={6} />
          </Columns>
        </SideColumn>
      </Columns>
    </Board>
  );
}

const range = (from: number, to: number, step: number) => Array.from({ length: Math.round((to - from) / step) + 1 }, (_, i) => from + i * step);

function Trends() {
  const pos: Plot = { w: 158, h: 90, l: 22, r: 150, t: 3, b: 81, lo: 0, hi: 400 };
  const tests: Plot = { w: 158, h: 90, l: 23, r: 149, t: 18, b: 81, lo: 0, hi: 7000 };
  const neg: Plot = { w: 144, h: 90, l: 22, r: 135, t: 7, b: 82, lo: 0, hi: 160 };
  const cum: Plot = { w: 158, h: 90, l: 27, r: 148, t: 10, b: 80, lo: 0, hi: 14000 };
  const roll: Plot = { w: 158, h: 90, l: 25, r: 149, t: 3, b: 77, lo: 0, hi: 6000 };
  const age: Plot = { w: 119, h: 177, l: 20, r: 114, t: 3, b: 159, lo: 0, hi: 700 };
  const d14: Plot = { w: 144, h: 90, l: 17, r: 138, t: 3, b: 77, lo: 34, hi: 52 };
  const d7: Plot = { w: 144, h: 90, l: 19, r: 138, t: 9, b: 77, lo: 240, hi: 260 };
  const v14 = [34.6, 36.6, 39.9, 41, 41.7, 42.5, 43.5, 44.6, 46.1, 47.4, 49.5, 50.1, 48, 48.1];
  const v7 = [241.9, 245.9, 243.7, 253.9, 261.4, 245.6, 242.1];
  const x14 = (i: number) => 17 + (i * 121) / 13;
  const x7 = (i: number) => 19 + (i * 119) / 6;
  return (
    <Board $top={8} $left={7} $right={9}>
      <Head height={45} top={10} logoTop={3} help={3} title={['COVID-19 TRENDS']} />
      <Columns $cols="160fr 121fr 160fr" $gap={4}>
        <Stack>
          <Card $h={101}>
            <CardTitle>DAILY NEW POSITIVES</CardTitle>
            <svg viewBox="0 0 158 90">
              <Axis p={pos} ticks={range(0, 400, 50)} name="POSITIVES" /><MonthAxis p={pos} />
              <DayBars p={pos} values={NEW_POSITIVES} fill="#1a7d89" />
            </svg>
          </Card>
          <Card $h={101}>
            <CardTitle>DAILY UNIQUE AND SERIAL TESTS</CardTitle>
            <svg viewBox="0 0 158 90">
              <g fontSize="4" fill="#333"><circle cx="65" cy="4" r="1.300" fill="#db5d42" /><text x="67" y="5.500">Unique</text><circle cx="83" cy="4" r="1.300" fill="#7b3328" /><text x="85" y="5.500">Serial</text></g>
              <Axis p={tests} ticks={range(0, 7000, 1000)} name="TESTS" /><MonthAxis p={tests} />
              <DayBars p={tests} values={TESTS_TOTAL} base={TESTS_UNIQUE} fill="#7b3328" />
              <DayBars p={tests} values={TESTS_UNIQUE.map((v, i) => Math.min(v, TESTS_TOTAL[i]))} fill="#db5d42" />
            </svg>
          </Card>
        </Stack>
        <Stack>
          <Card $h={188}>
            <CardTitle>AGE COMPARISON</CardTitle>
            <svg viewBox="0 0 119 177">
              <Axis p={age} ticks={range(0, 700, 100)} name="CASES" />
              <Bars p={age} bars={AGES} step={8.6} width={7.8} fill={color.yellow} tilt />
              <text x="68" y="175" fontSize="4" textAnchor="middle" fill="#333">AGE</text>
            </svg>
          </Card>
          <Columns $cols="1fr 1fr" $gap={5}>
            <Press $h={14} $fill={color.yellow}>PRESS FOR ACTIVES</Press>
            <Press $h={14}>PRESS FOR POSITIVES</Press>
          </Columns>
        </Stack>
        <Stack>
          <Card $h={101}>
            <CardTitle>CUMULATIVE POSITIVES AND RECOVERED</CardTitle>
            <svg viewBox="0 0 158 90">
              <g fontSize="4" fill="#333"><circle cx="61" cy="4" r="1.300" fill={color.yellow} /><text x="63" y="5.500">Positives</text><circle cx="82" cy="4" r="1.300" fill={color.teal} /><text x="84" y="5.500">Recovered</text></g>
              <Axis p={cum} ticks={range(0, 14000, 2000)} name="CASES" size={5} /><MonthAxis p={cum} short size={5} />
              <Line p={cum} data={CUM_POS} stroke={color.yellow} /><Line p={cum} data={CUM_REC} stroke={color.teal} />
            </svg>
          </Card>
          <Card $h={101}>
            <CardTitle>14 DAY ROLLING AVERAGE DAILY TOTAL TESTS</CardTitle>
            <svg viewBox="0 0 158 90">
              <Line p={roll} data={ROLLING} stroke="#8fb071" fill={color.green} />
              <Axis p={roll} ticks={range(0, 6000, 1000)} name="TOTAL TESTS" /><MonthAxis p={roll} />
              <Tags p={roll} tags={ROLLING_TAGS} fill="#7fa35c" />
              <Caption p={roll} y={88}>Calculation = (Sum of Past 14 Days of Total Tests / 14 Days)</Caption>
            </svg>
          </Card>
        </Stack>
      </Columns>
      <Columns $cols="1fr 1fr 1fr" $gap={6} $top={4}>
        <Card $h={101}>
          <CardTitle>PREVIOUSLY TESTED NEG. BEFORE POS. TEST</CardTitle>
          <svg viewBox="0 0 144 90">
            <Axis p={neg} ticks={range(0, 160, 20)} name="CASES" /><MonthAxis p={neg} />
            <DayBars p={neg} values={NEG_BEFORE} fill="#fbab35" />
          </svg>
        </Card>
        <Card $h={101}>
          <CardTitle>14 DAYS of POSITIVES per 10,000 PEOPLE</CardTitle>
          <svg viewBox="0 0 144 90">
            <Line p={d14} data={v14.map((v, i) => [i, v] as Pt)} stroke={color.teal} fill={color.teal} at={x14} />
            <Axis p={d14} ticks={range(34, 52, 2)} name="POSITIVES" />
            <DateAxis p={d14} x={i => x14(i * 2)} labels={['Aug 26', 'Aug 28', 'Aug 30', 'Sep 01', 'Sep 03', 'Sep 05', 'Sep 07']} />
            <Tags p={d14} fill="#2a8a95" at={x14} tags={[[0, 35.3, '34.6'], [2, 40.7, '39.9'], [3, 41.7, '41.0'], [5, 43.2, '42.5'], [6, 44.3, '43.5'], [8, 46.8, '46.1'], [9, 48, '47.4'], [11, 50.8, '50.1'], [12.800, 48.800, '48.1']]} />
            <Caption p={d14} y={88}>Calculation = (Sum of Past 14 Days of Positives / Population) x 10,000</Caption>
          </svg>
        </Card>
        <Card $h={101}>
          <CardTitle>7 DAYS of POSITIVES per 100,000 PEOPLE</CardTitle>
          <svg viewBox="0 0 144 90">
            <Line p={d7} data={v7.map((v, i) => [i, v] as Pt)} stroke="#dc6a50" fill={color.orange} at={x7} />
            <Axis p={d7} ticks={[240, 245, 250, 255, 260]} name="POSITIVES" />
            <DateAxis p={d7} x={x7} labels={['Sep 02', 'Sep 03', 'Sep 04', 'Sep 05', 'Sep 06', 'Sep 07', 'Sep 08']} />
            <Tags p={d7} fill="#dc6a50" at={x7} tags={v7.map((v, i) => [i, v + (i === 1 ? 0.9 : 0.7), v.toFixed(1)] as Tag)} />
            <Caption p={d7} y={88}>Calculation = (Sum of Past 7 Days of Positives / Population) x 100,000</Caption>
          </svg>
        </Card>
      </Columns>
    </Board>
  );
}

function LegendList({ items }: { items: [string, string][] }) {
  return <Legend>{items.map(([n, c]) => <li key={n}><Dot $tint={c} />{n}</li>)}</Legend>;
}

function Demographics() {
  const s: Plot = { w: 145, h: 173, l: 24, r: 136, t: 3, b: 145, lo: 0, hi: 900 };
  return (
    <Board $top={9} $left={10} $right={9}>
      <Head height={40} top={2} logoTop={1} help={2} title={['COVID-19 DEMOGRAPHICS and', 'SOURCE of EXPOSURE']} />
      <Columns $cols="147fr 147fr 143fr" $gap={5} $top={4}>
        <Card $h={184}>
          <CardTitle>GENDER</CardTitle>
          <svg viewBox="0 0 145 150">
            <Donut cx={73} cy={82} r={42} inner={25} parts={[[52.75, color.orange], [47.25, color.teal]]} />
            <path d="M39 47h3l3 4M99 116l2 4h3" fill="none" stroke="#aaa" strokeWidth="0.5" />
            <g fontSize="4" fill="#333"><text x="38" y="49" textAnchor="end">1049 (47.25%)</text><text x="105" y="121">1171 (52.75%)</text></g>
          </svg>
          <LegendList items={[['Female', color.orange], ['Male', color.teal]]} />
        </Card>
        <Card $h={184}>
          <CardTitle>SPREADTYPE</CardTitle>
          <svg viewBox="0 0 145 173">
            <Axis p={s} ticks={range(0, 900, 100)} name="ACTIVES" faint />
            <Bars p={s} bars={SPREAD} step={19} width={17} tilt tag="#333" />
          </svg>
        </Card>
        <Card $h={184}>
          <CardTitle>RACE</CardTitle>
          <svg viewBox="0 0 141 150">
            <Donut cx={71} cy={82} r={41} inner={24} parts={[[62.7, color.teal], [27.75, color.orange], [3.74, color.yellow], [3.69, color.maroon], [1.5, color.green], [0.62, '#000']]} />
            <path d="M29 59h3l4 3M48 43h2l2 4M58 37h4l1 5M79 124v4h3" fill="none" stroke="#aaa" strokeWidth="0.5" />
            <g fontSize="4" fill="#333" textAnchor="middle">
              <text x="57" y="36">82</text><text x="55" y="41">(3.69%)</text><text x="36" y="43">83 (3.74%)</text>
              <text x="24" y="58">616</text><text x="20" y="63">(27.75%)</text><text x="93" y="129">1392 (62.7%)</text>
            </g>
          </svg>
          <LegendList items={[['White', color.teal], ['Unknown', color.orange], ['Black', color.yellow], ['American Indian', color.maroon], ['2 or More', color.green], ['Asian', '#000'], ['Other', '#777']]} />
        </Card>
      </Columns>
      <Columns $cols="1fr 1fr" $gap={3} $top={4}>
        <Press $h={14} $fill={color.green}>PRESS FOR ACTIVE POSITIVES</Press>
        <Press $h={14}>PRESS FOR CUMULATIVE POSITIVES</Press>
      </Columns>
    </Board>
  );
}

function Hospitals() {
  const act: Plot = { w: 143, h: 60, l: 10, r: 134, t: 7, b: 52, lo: 0, hi: 60 };
  const age: Plot = { w: 143, h: 98, l: 22, r: 138, t: 3, b: 86, lo: 0, hi: 120 };
  const dAge: Plot = { w: 141, h: 69, l: 19, r: 136, t: 3, b: 57, lo: 0, hi: 80 };
  const mon: Plot = { w: 141, h: 60, l: 15, r: 136, t: 2, b: 41, lo: 0, hi: 60 };
  return (
    <Board $top={10} $left={10} $right={7}>
      <Head height={43} top={3} logoTop={2} help={1} title={['STATE HOSPITALIZATIONS', 'and DEATHS']} />
      <Columns $cols="302fr 143fr" $gap={4} $top={2}>
        <Center $h={15}><Heading $size={8}>HOSPITALIZATIONS</Heading></Center>
        <Center $h={15}><Heading $size={8}>DEATHS</Heading></Center>
      </Columns>
      <Columns $cols="144fr 154fr 143fr" $gap={4} $top={4}>
        <Stack>
          <Card $h={71}>
            <CardTitle>ACTIVE HOSPITALIZATIONS</CardTitle>
            <svg viewBox="0 0 143 60">
              <Axis p={act} ticks={[0, 20, 40, 60]} faint /><MonthAxis p={act} plain />
              <Line p={act} data={HOSP} stroke={color.yellow} fill={color.yellow} />
              <Tags p={act} fill="#f9b248" tags={[[14, 25, '20'], [23, 4, '10'], [69, 44, '39'], [123, 21, '27'], [153, 34, '40'], [148, 60, '66'], [164, 60, '64'], [176, 58, '53']]} />
            </svg>
          </Card>
          <Card $h={109}>
            <CardTitle>AGE OF TOTAL HOSPITALIZED</CardTitle>
            <svg viewBox="0 0 143 98">
              <Axis p={age} ticks={range(0, 120, 20)} name="HOSPITALIZATIONS" faint />
              <Bars p={age} bars={HOSP_AGES} step={13} width={10} fill={color.green} />
              <text x="79" y="96" fontSize="4" fill="#333" textAnchor="middle">AGE</text>
            </svg>
          </Card>
        </Stack>
        <Stack>
          <Columns $cols="1fr 1fr 1fr" $gap={4}>
            <Metric h={25} label={'COVID ACTIVE\nNON-ICU'} value="35" tint="#bb5a60" size={9} />
            <Metric h={25} label={'COVID ACTIVE\nHOSPITALIZATIONS'} value="53" tint="#333" size={9} />
            <Metric h={25} label="COVID ACTIVE ICU" value="18" tint="#2f8d98" size={9} />
            <Metric h={25} label={'COVID TOTAL\nNON-ICU'} value="448" tint="#bb5a60" size={9} />
            <Metric h={25} label={'COVID TOTAL\nHOSPITALIZATIONS'} value="611" tint="#333" size={9} />
            <Metric h={25} label="COVID TOTAL ICU" value="163" tint="#2f8d98" size={9} />
          </Columns>
          <Columns $cols="1fr 1fr" $gap={4}>
            <Card $h={70}><CardTitle>OCCUPIED NON-ICU BEDS</CardTitle><Gauge value="1,250" max="1,736" mark="35" share={0.7} tint={color.maroon} /></Card>
            <Card $h={70}><CardTitle>OCCUPIED ICU BEDS</CardTitle><Gauge value="143" max="290" mark="18" share={0.493} tint={color.teal} /></Card>
            <Metric h={24} label="NON-ICU BEDS OCCUPIED DUE TO COVID" value="2.02%" tint={color.maroon} size={8} tight />
            <Metric h={24} label={'ICU BEDS OCCUPIED DUE TO\nCOVID'} value="6.21%" tint={color.teal} size={8} />
          </Columns>
          <Metric h={24} label="AVERAGE HOSPITALIZATION LENGTH OF STAY (DAYS)" value="8.16" tint={color.yellow} size={8} />
        </Stack>
        <Stack>
          <Metric h={25} label="CUMULATIVE DEATHS" value="157" tint={color.orange} size={9} />
          <Card $h={80}>
            <CardTitle>CUMULATIVE DEATHS BY AGE GROUP</CardTitle>
            <svg viewBox="0 0 141 69">
              <Axis p={dAge} ticks={[0, 20, 40, 60, 80]} name="DEATHS" faint />
              <Bars p={dAge} bars={DEATH_AGES} step={13} width={10} fill={color.orange} />
              <text x="76" y="67" fontSize="4" fill="#333" textAnchor="middle">AGE</text>
            </svg>
          </Card>
          <Card $h={71}>
            <CardTitle>DEATHS BY MONTH</CardTitle>
            <svg viewBox="0 0 141 60">
              <Axis p={mon} ticks={[0, 20, 40, 60]} faint />
              <Bars p={mon} bars={DEATH_MONTHS} step={17.4} width={14} fill={color.orange} tilt />
            </svg>
          </Card>
        </Stack>
      </Columns>
    </Board>
  );
}

function CountyAnalysis() {
  return (
    <Board $top={8} $left={10} $right={9}>
      <Head height={35} top={4} logoTop={0} help={7} title={['NORTH DAKOTA COUNTY', 'ANALYSIS']} />
      <CountyLayout>
        <CountyButtons>
          <Press $small $h={16} $fill={color.orange}>PRESS FOR ACTIVE POSITIVES</Press>
          <Press $small $h={16}>PRESS FOR DAILY POSITIVES</Press>
          <Press $small $h={16}>PRESS FOR CUMULATIVE POSITIVES</Press>
          <Press $small $h={16}>PRESS FOR CUMULATIVE DEATHS</Press>
          <Press $small $h={16}>PRESS FOR ACTIVE PER 10K</Press>
        </CountyButtons>
        <MapFigure><CountyMap /></MapFigure>
      </CountyLayout>
    </Board>
  );
}

/* ---------- lower page ---------- */

const PowerBar = styled.div`
  display: flex; align-items: center; height: 25px; padding: 3px 8px 0; gap: 16px; background: #eaeaea; border-top: 1px solid #c8c8c8;
  color: #000; font-size: 9px; font-weight: 600;
  span { margin-right: auto; }
`;
const IconButton = styled.button`padding: 0; border: 0; background: none; color: #000; svg { width: 11px; height: 11px; }`;
const SerologyTitle = styled.h3`margin-top: 30px; font-size: 12px; line-height: 16px; font-weight: 700;`;
const SerologyNote = styled.p`margin: 6px 0; font: italic 9px/18px "Liberation Sans", Arial, sans-serif;`;
const SerologyTable = styled.table`
  width: 337px; table-layout: fixed; border-collapse: collapse; border: 1px solid #222;
  td { padding: 0; border: 1px solid #777; line-height: 16px; }
`;
const DeathsTitle = styled.h2`margin: 49px 0 6px -10px; font-size: 18px; line-height: 22px; font-weight: 400;`;
const DeathsTable = styled.table`
  width: 100%; table-layout: fixed; border-collapse: collapse; line-height: 15px; white-space: nowrap;
  th, td { padding: 5px 0 5px 6px; border: 1px solid #ddd; text-align: left; vertical-align: top; font-weight: 400; height: 26px; }
  thead th { font-weight: 700; border-bottom-width: 2px; }
  th:last-child { width: 43px; }
`;
const Panels = styled.div`display: flex; flex-direction: column; gap: 20px; margin-top: 34px;`;
const Panel = styled.button`
  display: flex; align-items: center; justify-content: space-between; height: 45px; padding: 0 17px; background: #f5f5f5;
  border: 1px solid #ddd; border-bottom: 2px solid #dadada; border-radius: 3px; color: #333; font-size: 11px; font-weight: 700; text-align: left; white-space: nowrap;
  svg { color: ${color.link}; width: 10px; height: 10px; flex: none; }
`;
const Footer = styled.footer`
  display: grid; grid-template-columns: 170px 1fr 148px; height: 191px; padding: 23px 23px 0; margin-bottom: 18px; background: #786e65; color: #fff;
  font-size: 9px; line-height: 16px;
  a { color: #fff; }
`;
const FooterLogo = styled(LogoBox)`margin-left: 16px;`;
const Address = styled.div`
  padding-top: 1px;
  a { text-decoration: underline; }
`;
const Intranet = styled.p`margin-top: 30px;`;
const FooterLinks = styled.ul`
  display: flex; flex-wrap: wrap; align-content: flex-start; max-width: 134px; padding-top: 1px;
  li { display: flex; align-items: center; }
  li.bar::before { content: ""; height: 9px; border-left: 1px solid #fff; margin: 0 7px 0 2px; }
  li.first { padding-right: 9px; }
`;
const Social = styled.div`display: flex; align-items: center; gap: 9px; margin-top: 9px; svg { height: 17px; width: auto; }`;
const Feedback = styled.button`
  position: fixed; left: 7px; bottom: 0; height: 24px; padding: 0 10px; border: 0; border-radius: 4px 4px 0 0; background: ${color.orange};
  color: #fff; font-size: 10px; font-weight: 700;
`;

const NAV: [string, boolean, boolean][] = [['Home', false, false], ['How we help', true, true], ['Who We Serve', false, true], ['Health Topics A-Z', false, false], ['News', false, false], ['Events', false, false], ['About Us', false, false], ['Report Fraud', false, false]];
const PANELS = ['By County - Total Tests Completed & Positive Cases', 'By City & County – Long Term Care Cases & Deaths', 'By County - Total Unique Tests, Positives, Negatives, Recovered, and Deaths', 'By County - Source of Exposure', 'By County - Rate per 100,000'];

export default function App() {
  return (
    <>
      <Global />
      <Portal>
        <PortalState>North Dakota</PortalState>
        <PortalSite href="#">nd.gov</PortalSite>
        <PortalNote>Official Portal for<br />North Dakota State Government</PortalNote>
      </Portal>
      <Banner>
        <LogoBox $width={132}><Logo /></LogoBox>
        <Search>
          <SearchInput aria-label="Search" placeholder="Enter Keywords" />
          <SearchButton type="button" aria-label="Search"><FaSearch /></SearchButton>
        </Search>
      </Banner>
      <Nav>
        <NavList>
          {NAV.map(([name, active, menu]) => <li key={name}><NavLink href="#" $active={active}>{name}{menu && <Caret />}</NavLink></li>)}
        </NavList>
      </Nav>
      <Main>
        <Crumbs>
          <li><a href="#">Home</a></li><li><a href="#">Diseases &amp; Conditions</a></li><li><a href="#">Coronavirus</a></li><li>Coronavirus Cases</li>
        </Crumbs>
        <PageTitle>Coronavirus Cases</PageTitle>
        <Body>
          <Intro>
            <p>{'WELCOME to the refreshed COVID-19 dashboard. In this revised format, you’ll find new\ncounty-level breakdowns, as well as additional statewide data. The dashboard is best\nviewed on a computer, but turning your mobile device to landscape will improve your\nexperience. We welcome your feedback!'}</p>
            <p>
              <ExternalLink href="#">Share Your Feedback
                <svg width="7" height="7" viewBox="0 0 10 10" fill="none" stroke="#888"><path d="M4 3.500H1v6h6V7M4 .5h5.500v5.500L8 4.500 5 7.500 3.500 6 6.500 3z" /></svg>
              </ExternalLink>
            </p>
            <p>{'The North Dakota Department of Health dashboard is updated daily by 11 am and includes\ncases reported through the previous day. The investigations are ongoing and information\non the website is likely to change as cases are investigated. The information on the\ndashboard is the most up to date and may be different than previous news releases.'}</p>
          </Intro>
          <Report>
            <ReportTop $top={31}>
              <ReportTitle>STATE and COUNTY<br />LEVEL INFORMATION</ReportTitle>
              <Updated><b>LAST UPDATED</b>9/9/2020 9:04:31 AM</Updated>
            </ReportTop>
            <StatusReport />
            <Trends />
            <ReportTop $top={25}><ReportTitle>STATE LEVEL<br />INFORMATION</ReportTitle></ReportTop>
            <Demographics />
            <Hospitals />
            <CountyAnalysis />
          </Report>
          <PowerBar>
            <span>Microsoft Power BI</span>
            <IconButton type="button" aria-label="Share"><svg viewBox="0 0 16 16" fill="none" stroke="currentColor"><path d="M2.500 4v10.500H12V12M5 11c0-4 2-6 5-6V2l5 4.500L10 11V8C8 8 6 9 5 11z" /></svg></IconButton>
            <IconButton type="button" aria-label="Full screen"><svg viewBox="0 0 16 16" fill="none" stroke="currentColor"><path d="M2 14 14 2M9.500 1.500h5v5M1.500 9.500v5h5" /></svg></IconButton>
          </PowerBar>
          <SerologyTitle>Serology Testing</SerologyTitle>
          <SerologyNote>Reported serology tests are completed in a laboratory and do not include point of care serology tests. Individuals who complete an antibody and a PCR test maybe be counted in totals for both.</SerologyNote>
          <SerologyTable>
            <colgroup><col style={{ width: '33%' }} /><col style={{ width: '48%' }} /><col /></colgroup>
            <tbody>
              <tr><td>Detected</td><td>Not Detected</td><td>Total</td></tr>
              <tr><td>359</td><td>8559</td><td>8918</td></tr>
            </tbody>
          </SerologyTable>
          <DeathsTitle>Deaths</DeathsTitle>
          <DeathsTable>
            <thead><tr><th>Cause</th><th>Cases</th></tr></thead>
            <tbody>
              <tr><td><b>Deaths Due to COVID-19</b><br /><i>Official number of individuals who died from COVID-19 as stated on the official death<br />record. There will be a delay - by state law, a death record must be filed within 10 days<br />of the date of death.</i></td><td>125</td></tr>
              <tr><td><b>Deaths Where COVID-19 is Not the Primary Cause</b><br /><i>Deaths that list something other than COVID-19 as the official cause of death.</i></td><td>26</td></tr>
              <tr><td><b>Pending Death Records</b><br /><i>The number of deaths where an official death record has not been filed. Per state law,<br />this can take up to 10 days from the date of death.</i></td><td>5</td></tr>
              <tr><td><b>Total</b> number of individuals who tested positive and died from any cause while<br />infected with COVID-19.</td><td>156</td></tr>
              <tr><td /><td /></tr>
              <tr><td><b>Deaths of Individuals Presumed Positive</b><br />Deaths of individuals where COVID-19 was listed as the cause of death on the<br />official death record, but there was not a positive test result. These individuals<br />are presumed positive by the health care provider based on symptoms and/or<br />exposure.</td><td>4</td></tr>
            </tbody>
          </DeathsTable>
          <Panels>
            {PANELS.map(t => <Panel key={t} type="button" aria-expanded="false">{t}<FaPlus /></Panel>)}
          </Panels>
        </Body>
      </Main>
      <Footer>
        <Address>
          <p>Copyright © 2019 <a href="#">North Dakota<br />Department of Health</a></p>
          <p>600 East Boulevard Ave Bismarck,<br />ND 58505-0200</p>
          <p>Phone: 701-328-2372</p>
          <p><a href="#">Contact Us</a></p>
          <Intranet><a href="#">Intranet</a></Intranet>
        </Address>
        <FooterLinks>
          <li className="first"><a href="#">Accessibility</a></li><li className="bar"><a href="#">Contact</a></li>
          <li className="bar first"><a href="#">Disclaimer</a></li><li className="bar"><a href="#">Privacy Policy</a></li>
          <li className="bar"><a href="#">Security Policy</a></li>
        </FooterLinks>
        <div>
          <FooterLogo $width={132}><Logo light /></FooterLogo>
          <Social>
            <a href="#" aria-label="Email"><FaEnvelope /></a>
            <a href="#" aria-label="Facebook"><FaFacebookSquare /></a>
            <a href="#" aria-label="Twitter"><FaTwitterSquare /></a>
            <a href="#" aria-label="YouTube"><FaYoutubeSquare /></a>
          </Social>
        </div>
      </Footer>
      <Feedback type="button">Feedback (+)</Feedback>
    </>
  );
}
